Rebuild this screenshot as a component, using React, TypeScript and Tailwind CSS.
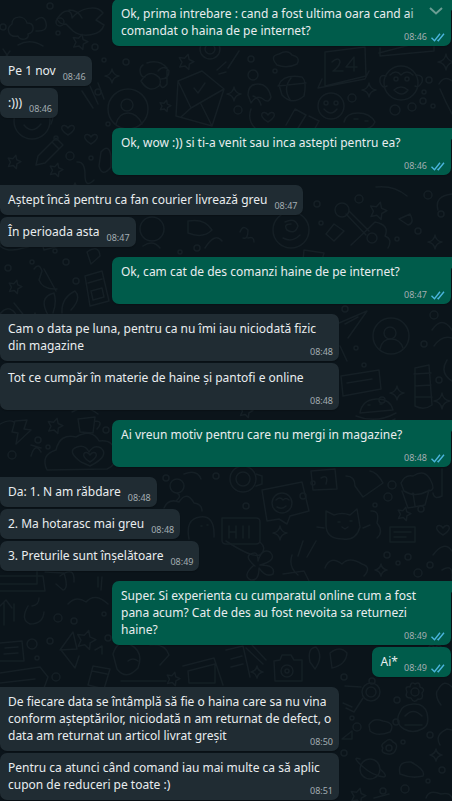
import React from "react";

type Message = { from: "me" | "them"; text: string; time: string; menu?: boolean };

const groups: Message[][] = [
  [{ from: "me", text: "Ok, prima intrebare : cand a fost ultima oara cand ai comandat o haina de pe internet?", time: "08:46", menu: true }],
  [
    { from: "them", text: "Pe 1 nov", time: "08:46" },
    { from: "them", text: ":)))", time: "08:46" },
  ],
  [{ from: "me", text: "Ok, wow :)) si ti-a venit sau inca astepti pentru ea?", time: "08:46" }],
  [
    { from: "them", text: "Aștept încă pentru ca fan courier livrează greu", time: "08:47" },
    { from: "them", text: "În perioada asta", time: "08:47" },
  ],
  [{ from: "me", text: "Ok, cam cat de des comanzi haine de pe internet?", time: "08:47" }],
  [
    { from: "them", text: "Cam o data pe luna, pentru ca nu îmi iau niciodată fizic din magazine", time: "08:48" },
    { from: "them", text: "Tot ce cumpăr în materie de haine și pantofi e online", time: "08:48" },
  ],
  [{ from: "me", text: "Ai vreun motiv pentru care nu mergi in magazine?", time: "08:48" }],
  [
    { from: "them", text: "Da: 1. N am răbdare", time: "08:48" },
    { from: "them", text: "2. Ma hotarasc mai greu", time: "08:48" },
    { from: "them", text: "3. Preturile sunt înșelătoare", time: "08:49" },
  ],
  [
    { from: "me", text: "Super. Si experienta cu cumparatul online cum a fost pana acum? Cat de des au fost nevoita sa returnezi haine?", time: "08:49" },
    { from: "me", text: "Ai*", time: "08:49" },
  ],
  [
    { from: "them", text: "De fiecare data se întâmplă să fie o haina care sa nu vina conform așteptărilor, niciodată n am returnat de defect, o data am returnat un articol livrat greșit", time: "08:50" },
    { from: "them", text: "Pentru ca atunci când comand iau mai multe ca să aplic cupon de reduceri pe toate :)", time: "08:51" },
  ],
];

const starAt: [number, number, number][] = [
  [80, 42, 8], [186, 62, 8], [165, 106, 6], [14, 162, 7], [56, 170, 7], [378, 211, 9], [15, 287, 7], [55, 426, 8],
  [404, 514, 7], [86, 640, 10], [358, 796, 8], [173, 679, 7], [246, 411, 7],
];
const sparkAt: [number, number, number][] = [
  [112, 76, 7], [234, 94, 7], [369, 90, 7], [446, 62, 8], [435, 242, 7], [397, 393, 7], [442, 401, 8], [280, 533, 7],
  [381, 570, 6], [257, 672, 6], [436, 755, 6], [35, 318, 5], [75, 188, 5],
];
const ringAt: [number, number, number][] = [
  [3, 27, 3], [50, 6, 3], [58, 33, 2], [95, 47, 3], [60, 22, 4], [126, 62, 3], [104, 60, 2], [98, 92, 3], [70, 156, 4],
  [56, 138, 2], [91, 158, 2], [108, 124, 2], [253, 75, 5], [251, 59, 3], [275, 71, 2], [238, 110, 4], [352, 98, 4],
  [429, 80, 3], [424, 92, 2], [423, 101, 3], [433, 106, 2], [395, 110, 5], [412, 107, 4], [359, 199, 4], [317, 204, 3],
  [428, 195, 4], [321, 223, 2], [418, 231, 3], [397, 239, 2], [441, 214, 3], [8, 268, 3], [32, 262, 2], [66, 262, 3],
  [76, 281, 3], [55, 251, 2], [197, 248, 3], [180, 252, 2], [345, 309, 3], [434, 315, 4], [424, 344, 3], [356, 348, 2],
  [364, 365, 2], [382, 400, 3], [439, 380, 3], [38, 440, 3], [12, 455, 4], [48, 447, 2], [106, 430, 3], [166, 478, 3],
  [216, 476, 3], [303, 496, 3], [313, 483, 2], [392, 485, 4], [388, 497, 4], [421, 509, 3], [246, 506, 3], [375, 505, 2],
  [32, 644, 5], [50, 641, 3], [74, 621, 3], [104, 614, 2], [58, 618, 4], [108, 638, 3], [56, 677, 4], [37, 658, 2],
  [387, 555, 3], [408, 557, 3], [430, 565, 3], [398, 563, 2], [418, 573, 4], [344, 677, 3], [352, 718, 2], [397, 700, 3],
  [396, 722, 3], [357, 727, 4], [430, 735, 3], [403, 742, 2], [344, 753, 3], [383, 791, 3], [405, 789, 4], [442, 770, 3],
  [428, 781, 2], [372, 681, 3],
];
const heartAt: [number, number][] = [[268, 117], [91, 139], [443, 530], [90, 457], [68, 130], [435, 650]];

function starPath(x: number, y: number, r: number) {
  const points = Array.from({ length: 10 }, (_, i) => {
    const a = (Math.PI * i) / 5 - 1.3;
    const d = i % 2 ? r / 2 : r;
    return `${(x + d * Math.cos(a)).toFixed(1)} ${(y + d * Math.sin(a)).toFixed(1)}`;
  });
  return `M${points.join("L")}Z`;
}

function Wallpaper() {
  return (
    <svg aria-hidden="true" className="pointer-events-none absolute left-0 top-0" width="452" height="801" viewBox="0 0 452 801" fill="none" stroke="#151f25" strokeWidth="1.5" strokeLinecap="round" strokeLinejoin="round">
      {starAt.map(([x, y, r]) => <path key={`${x}-${y}`} d={starPath(x, y, r)} />)}
      {sparkAt.map(([x, y, r]) => <path key={`${x}-${y}`} d={`M${x} ${y - r}q1 ${r - 1} ${r} ${r}q${1 - r} 1 ${-r} ${r}q-1 ${1 - r} ${-r} ${-r}q${r - 1} -1 ${r} ${-r}Z`} />)}
      {ringAt.map(([x, y, r]) => <circle key={`${x}-${y}`} cx={x} cy={y} r={r} />)}
      {heartAt.map(([x, y]) => <path key={`${x}-${y}`} d={`M${x} ${y + 5}c-12-7-4-13 0-7c4-6 12 0 0 7Z`} />)}
      {/* top left: paw, dinosaur, badge, headphones, person, envelope, pencil */}
      <path d="M12 24c0-9 13-9 15-1c8 0 8 9 1 11c2 6-8 7-10 2c-9 2-13-7-6-12ZM36 20q8-6 10 3t-10 8" />
      <path d="M57 19c8-12 15-9 15-1c8-10 25-14 31-5l-7 7l8 5c-3 11-22 13-31 6l-7-7q-6 1-9-5ZM69 10q9 0 13 8" />
      <path d="M143 65c-5 3-3 13 2 12M147 63q12-4 20 5M141 81q8 13 18 5q4-7-3-11q-8-5-15 6ZM158 71q6-7 11 0q0 8-8 8M167 68v16q-5 7-7 0" />
      <circle cx="128" cy="109" r="20" /><circle cx="127" cy="105" r="6" /><path d="M116 124q3-11 12-11t14 11" />
      <path d="M178 81l24-10l22 18l-12 37l-36-10ZM178 81l13 27l33-19M191 108l-10 9M201 104l11 22M194 88l4 5l7-10" />
      <circle cx="32" cy="121" r="18" /><path d="M23 112q9-7 18 0M24 125q8 10 17-1M18 45q12-7 25 1M9 103q8-7 15-3M48 106q8 8 3 18" />
      <path d="M38 156l18-18l7 7l-18 18l-9 2ZM52 142l7 7M77 162q8-1 8 13t9 5M101 152q8-9 10 4v11q-9 11-12-1ZM82 91l11 17M90 86l8 18M98 83l6 16" />
      {/* upper right: cloud, acorn, toadstool, candy, calendar, smiley, monkey */}
      <path d="M277 65q-8-9 2-11q9-5 13 1q9 2 5 9q-10 5-20 1Z" />
      <path d="M279 85q4-11 23-8q5 4 2 19q-12 10-22-1ZM278 86l28-3M291 78q-9 11 0 23M248 95q0-11 10-11t13 13q-2 7-8 2t-12 4ZM253 96q6 2 8 9" />
      <path d="M295 109l11 6l-8 13M309 116l10 5l-6 11M286 125l9-16M251 109q-4 11 4 19M325 52l40-5l1 29l-41 10ZM322 79l-4 9l47-9l4-8M332 62q7-6 8 0q-1 5-7 9h10M354 71v-14l-8 10h11" />
      <circle cx="331" cy="106" r="13" /><circle cx="326" cy="103" r="2" /><circle cx="336" cy="103" r="2" /><path d="M324 109q7 8 13 0M344 122q2-9 14-9t17 9q-3 8-17 8M354 119h4M365 121h3" />
      <circle cx="401" cy="83" r="17" /><path d="M386 76q-7-2-6 6q2 7 7 4M416 75q8 0 6 7q-3 6-7 4M390 75q6-6 11 0q6-6 12 0M394 90q7-6 14 0q-6 8-14 0" /><circle cx="396" cy="79" r="2" /><circle cx="407" cy="79" r="2" />
      <path d="M379 53l50-13M380 48v8l54-5v-7M439 84q5-9 13-3M440 89q5 12 12 25M3 49l12 18M1 63l9-12M228 68l11-17" />
      <circle cx="210" cy="49" r="10" /><circle cx="210" cy="49" r="5" /><path d="M217 70l9-8M219 74l7-2" />
      {/* second band */}
      <circle cx="291" cy="230" r="18" /><path d="M285 222q10-5 13 4q-3 9-11 4q-4-6 4-6M283 238q9 5 17-3M240 232q3-8 8-2q0 10-5 8M248 238q6-2 6 4" />
      <circle cx="342" cy="210" r="7" /><path d="M346 214l20 21M349 211l20 20M351 245q15-14 24-23q15 3 10 14q8 3 3 12M334 224l10 7l-10 10l-8-7ZM304 250l20 3l-2 7h-19ZM376 187q18-2 31 9M399 219l11-5q5 9-2 11ZM438 210q-4-14 14-16" />
      <circle cx="372" cy="238" r="5" /><circle cx="152" cy="229" r="12" /><path d="M188 221q17-3 24 9q-9 9-24 3ZM0 240q6-12 17-7q13-5 15 5q3 9-9 10q-14 5-23-2ZM41 240l36-9q9 2 5 9l-38 10ZM143 246q10-7 17 2M205 248q10-16 17-7" />
      <path d="M34 269q5-7 8 2l-3 9q4 10 18 9M44 269l12 22M87 252q12-8 13 4l-9 8ZM48 315q-10-18 6-22q3 9-1 20M62 313q-1-15 13-22q7 7-4 19M14 303l12 15M0 314q8-10 15-1q8 14 28 13q15 7 30 0" />
      <path d="M85 276l17-5l7 30l-19 5ZM88 283l14-4M91 291l11-3l2 9l-11 3ZM8 328h84M0 349q5-21 16-14" />
      {/* middle right */}
      <circle cx="391" cy="336" r="18" /><circle cx="390" cy="333" r="6" /><path d="M380 349q2-10 11-10t12 9M339 323l28-12l-19 27M345 324l13-7M340 346l7 15M432 330q10-15 20 0M434 346q8-11 18-8" />
      <path d="M341 376l38-6l2 19l-38 7ZM347 383l25-4M360 413q2-13 16-14t17 11ZM356 416q20 8 40-3M359 421q19 8 36-2M415 368l14-3l3 40q-8 6-17 1ZM414 374l17-1M415 386l16-1M416 397h16M368 405h2M380 404h2M447 360q-8 13 5 21" />
      <path d="M0 424q9-5 14-2M15 421l12-1l-3 9l7 1l-15 14l2-11l-6-1ZM78 419l17-2l-2 16l-13-1ZM95 421q9 0 2 8M31 445l10 3M31 456q4-14 10-4" />
      <path d="M47 470q-7-15 9-20q4-17 20-13q16-9 23 4q16-2 15 13q4 10-7 15ZM81 462q-15-11-4-15q8-3 12 5q5-8 12-4q9 8-11 18ZM72 412q14-8 26 2" />
      <circle cx="177" cy="486" r="7" /><path d="M177 493q5 3 0 7M184 474q13-5 17 5M164 508q4-10 15-6q8-12 15 1q8 1 8 8M189 539q-4-20 11-22t14 20M201 526h1M207 525h1" />
      {/* lower right: gear, polaroid, cat, cupcake */}
      <circle cx="243" cy="479" r="13" /><circle cx="243" cy="479" r="7" /><path d="M234 463l2-6h9l2 7M256 474l6 2v8l-6 2M262 490l40-8l7 29l-19 5l-3 8l-8-5l-12 2Z" /><circle cx="282" cy="503" r="10" /><path d="M276 500q4-4 7 0q3-3 6 0M277 507q5 3 9-1M311 471l24-2l2 20l-24 1ZM321 478q8-4 5 6" />
      <path d="M326 511l8 4q8-3 16 0l7-6l3 18q-4 14-17 12q-17 0-17-14ZM338 522h2M350 521h2M342 527l3 2l3-2M324 528l-7-1M363 528l7-3M371 511q9-1 6 12q7 9 0 15M346 476q9 0 9 10l8 11l20-14q-6-11-13-12" />
      <path d="M401 483q4-9 12-7q12-8 18 5q5 10-3 10q-13 7-24 0ZM402 491l6 17l17-3l4-15M413 493l2 13M442 469v27q-8 4-9-3M390 527h25v15h-25ZM394 532h17M394 537h12M222 518h34q4 0 4 4v18q0 4-4 4h-30q-4 0-4-4ZM229 526v12M236 526v12M229 532h7M243 526v12M249 526v12" />
      {/* lower left: laptop, apple, horn, books */}
      <path d="M0 576h43l2 15h-45M0 584h37v-17M45 572l19 1q5 16-1 17l-7-6M60 576q15-11 14 6M68 604q8-9 18-2q9-10 22 2M98 577v10M102 577l-1 13M28 606q-8 14 2 18q13 0 14-12M32 606q7-1 7-8M0 606l6-6l6 8M4 603v22M14 604v17M60 650l13-18l4 17ZM61 650l14 18l4-12M95 650l7-4v8" />
      <path d="M0 643l22-2l2 20H0M5 648l13-1M4 654l14-1M0 673l40-6l8 10l-4 11M0 683l35-4M0 691l25-3M93 666l17 3l-6 20l-16-4ZM92 671l15 3M113 654q5-16 18-9t7 23q-12 13-21 1ZM128 661q5-4 10 0M150 645q15-2 19 10l-9 10M121 681h45M183 666l31-8l9 27M188 671l27-7v19h-26Z" />
      <path d="M226 541q29 19 35 13t-1-12M255 566q-13-11-1-13q4-1 4 8q4-13 12-9q8 8-10 13q16 0 13 9q-7 4-14-6q0 13-8 12q-9-4 2-14M292 555q-4 12 6 20M303 541l-5 15M316 541l-9 16M325 568q5-13 17-4q7-8 20 0q10 3 2 12M283 574l21-3l5 10M433 555q11-15 19-4M442 570q12-7 10 9" />
      <path d="M226 650l17-4l7 31M231 659l11-3M231 667l12-3M246 648l17 16M252 645l14 15M274 661l6-1l2-5h9l3 5h8v21h-27Z" /><circle cx="287" cy="671" r="6" /><circle cx="287" cy="671" r="2" /><path d="M310 662q-3-14 6-15q8 9-1 22ZM330 653q10-8 17 0q-1 12-15 15Z" />
      <circle cx="371" cy="692" r="9" /><circle cx="371" cy="692" r="5" /><path d="M363 698l-9 14l-8-4M345 686l16 1M342 739l10-8v8ZM343 703l9 4" />
      <circle cx="415" cy="692" r="4" /><path d="M415 684q5-3 5 3q6 2 2 6q2 7-4 6q-4 5-7-1q-7 0-4-6q-3-6 3-5q1-6 5-3ZM400 712q2-7 13-8t14 9q3 13-5 16q-9 5-18 0q-10-6-4-17ZM405 716q8-9 17 0M405 725h17" />
      <path d="M369 725q4-8 14-4q13 2 7 11q-13 5-20-1ZM438 690q6-12 14-3M441 705q-6-8-4-14M440 745q-6-10 7-16l5 1M385 742q5-5 8 0q5 2 3 7q-2 6-8 5q-8-1-5-6q-3-3 2-6Z" /><circle cx="389" cy="748" r="3" />
      <circle cx="370" cy="769" r="10" /><path d="M360 759q-9-3 2 7t22 11q4-1-4-8M400 774q-3-13 11-12q15 8 12 14q-11 3-23-2ZM426 798q3-9 15-4q9-2 11 4M374 798l15-4" />
    </svg>
  );
}

function Ticks() {
  return (
    <svg role="img" aria-label="Citit" className="h-[9px] w-[14px]" viewBox="0 0 14 9" fill="none" stroke="#4ab5dd" strokeWidth="1.4">
      <path d="M.5 4.800L3.500 7.800L9 .7M6.500 7L7.300 7.800L13 .7" />
    </svg>
  );
}

function Bubble({ message, first }: { message: Message; first: boolean }) {
  const mine = message.from === "me";
  const shape = mine
    ? `mr-px self-end bg-[#005c4b] pl-[9px] ${first ? "rounded-tr-none" : ""}`
    : `self-start bg-[#202c33] pl-2 ${first ? "rounded-tl-none" : ""}`;
  return (
    <li className={`relative max-w-3/4 rounded-[7px] pb-1 pr-[6px] pt-[6px] shadow-[0_1px_1px_rgba(0,0,0,0.2)] ${shape}`}>
      {mine && first && (
        <svg aria-hidden="true" className="absolute -right-2 top-0 h-3 w-2" viewBox="0 0 8 12" fill="#005c4b"><path d="M0 0H6Q9 0 7 3L0 12Z" /></svg>
      )}
      <p>
        {message.text}
        <span aria-hidden="true" className={`inline-block h-px ${mine ? "w-[47px]" : "w-[30px]"}`} />
      </p>
      <div className="float-right -mt-[7px] flex h-[10px] items-center gap-1 text-[9px] leading-[10px] text-[#a3adb2]">
        <time>{message.time}</time>
        {mine && <Ticks />}
      </div>
      {message.menu && (
        <button type="button" aria-label="Meniu mesaj" className="absolute right-1 top-1 flex h-4 w-10 items-center justify-end bg-linear-to-r from-transparent to-[#005c4b] to-50% pr-1">
          <svg className="h-2 w-[14px]" viewBox="0 0 14 8" fill="none" stroke="#6b9d93" strokeWidth="2"><path d="M1 1L7 6.500L13 1" /></svg>
        </button>
      )}
    </li>
  );
}

export default function App() {
  return (
    <main className="relative flex h-screen flex-col justify-end overflow-hidden bg-[#0b141a] pb-px font-['Noto_Sans','Open_Sans',sans-serif] text-[12px] leading-[17px] text-[#e9edef]">
      <Wallpaper />
      <div className="flex flex-col gap-[10px]">
        {groups.map((group, g) => (
          <ul key={g} className="flex flex-col gap-[2px]">
            {group.map((message, i) => <Bubble key={i} message={message} first={i === 0} />)}
          </ul>
        ))}
      </div>
    </main>
  );
}
